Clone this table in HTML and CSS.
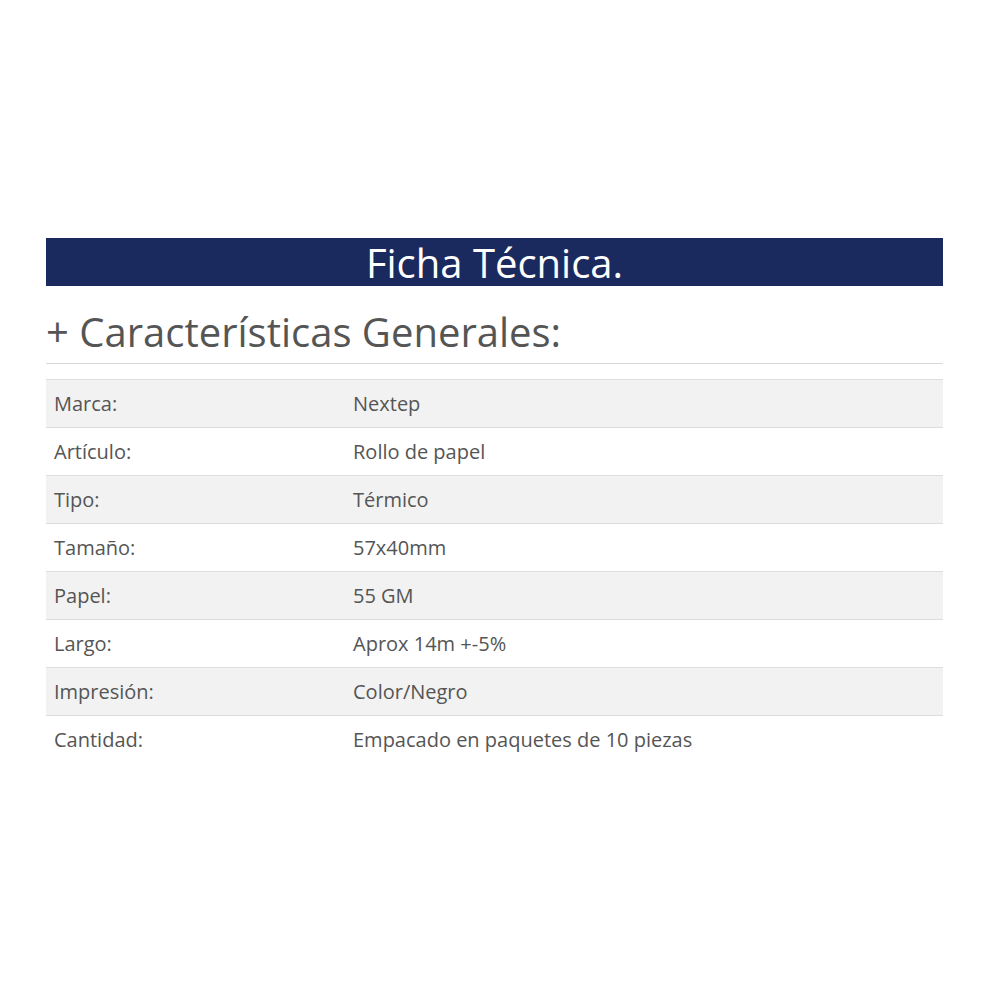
FILE: index.html
```html
<!DOCTYPE html>
<html lang="es">
<head>
<meta charset="utf-8">
<link rel="stylesheet" href="styles.css">
</head>
<body>
<div class="sheet">
  <h2 class="banner">Ficha Técnica.</h2>
  <h3 class="section">+ Características Generales:</h3>
  <table class="specs">
    <tr><td>Marca:</td><td>Nextep</td></tr>
    <tr><td>Artículo:</td><td>Rollo de papel</td></tr>
    <tr><td>Tipo:</td><td>Térmico</td></tr>
    <tr><td>Tamaño:</td><td>57x40mm</td></tr>
    <tr><td>Papel:</td><td>55 GM</td></tr>
    <tr><td>Largo:</td><td>Aprox 14m +-5%</td></tr>
    <tr><td>Impresión:</td><td>Color/Negro</td></tr>
    <tr><td>Cantidad:</td><td>Empacado en paquetes de 10 piezas</td></tr>
  </table>
</div>
</body>
</html>
```
FILE: styles.css
```css
html, body {
  margin: 0;
  padding: 0;
  background: #ffffff;
}
body {
  font-family: "Open Sans", "Liberation Sans", sans-serif;
  color: #555555;
}
.sheet {
  width: 897px;
  margin: 238px 0 0 46px;
}
.banner {
  margin: 0;
  height: 48px;
  background: #1b2a5e;
  color: #ffffff;
  font-weight: 400;
  font-size: 40px;
  line-height: 50px;
  text-align: center;
}
.section {
  margin: 0;
  padding: 20px 0 6px 0;
  font-weight: 400;
  font-size: 40px;
  line-height: 51px;
  color: #555555;
  border-bottom: 1px solid #d8d8d8;
}
.specs {
  margin-top: 15px;
  width: 100%;
  border-collapse: collapse;
  font-size: 20px;
}
.specs td {
  height: 47px;
  padding: 0 8px;
  border-top: 1px solid #dddddd;
  vertical-align: middle;
}
.specs td:first-child {
  width: 283px;
}
.specs tr:nth-child(odd) td {
  background: #f2f2f2;
}
```
